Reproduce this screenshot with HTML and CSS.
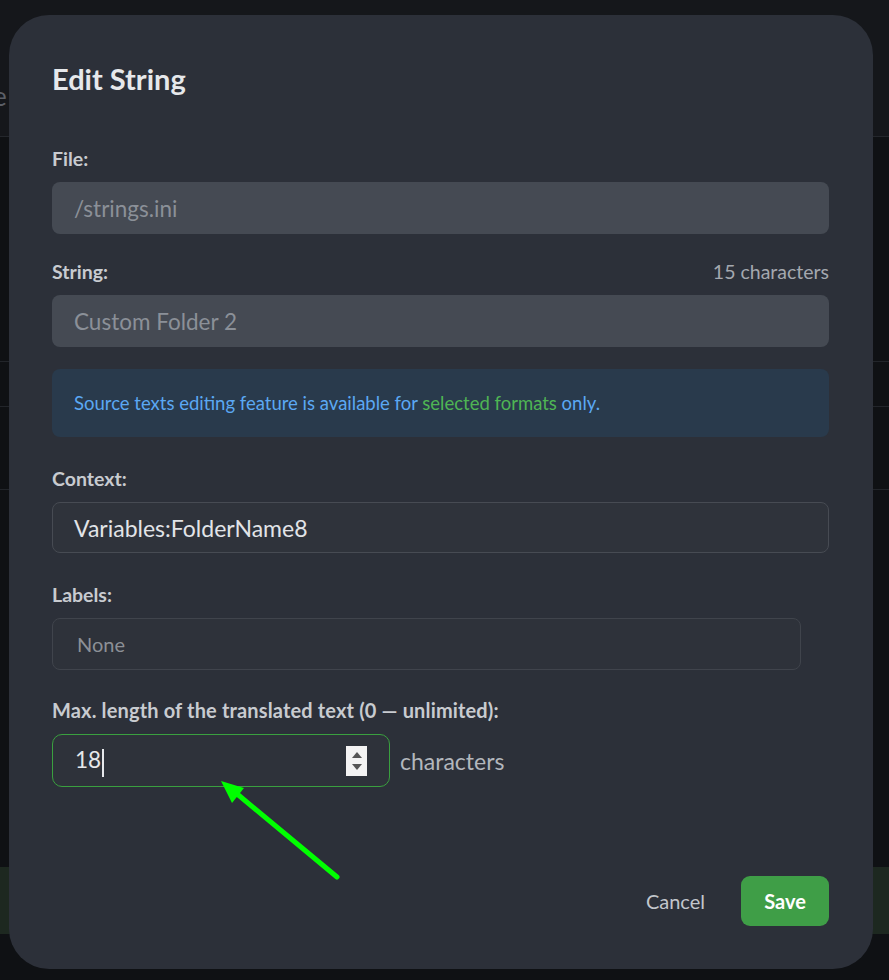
FILE: index.html
```html
<!DOCTYPE html>
<html lang="en">
<head>
<meta charset="utf-8">
<title>Edit String</title>
<link rel="stylesheet" href="styles.css">
</head>
<body>
<div class="page">
  <div class="page-head"><span class="page-title">e</span></div>
  <div class="page-row r1"></div>
  <div class="page-row r2"></div>
  <div class="page-row r3"></div>
  <div class="page-band"></div>
</div>

<div class="modal">
  <h1 class="modal-title">Edit String</h1>

  <div class="field f-file">
    <div class="label-row"><span class="label">File:</span></div>
    <div class="input input-disabled">/strings.ini</div>
  </div>

  <div class="field f-string">
    <div class="label-row"><span class="label">String:</span><span class="count">15 characters</span></div>
    <div class="input input-disabled">Custom Folder 2</div>
  </div>

  <div class="info">Source texts editing feature is available for <span class="info-link">selected formats</span> only.</div>

  <div class="field f-context">
    <div class="label-row"><span class="label">Context:</span></div>
    <div class="input input-text">Variables:FolderName8</div>
  </div>

  <div class="field f-labels">
    <div class="label-row"><span class="label">Labels:</span></div>
    <div class="input input-labels">None</div>
  </div>

  <div class="field f-max">
    <div class="label-row"><span class="label label-long">Max. length of the translated text (0 — unlimited):</span></div>
    <div class="max-row">
      <div class="input input-number">
        <span class="num-value">18</span><span class="caret"></span>
        <span class="spinner"><span class="tri-up"></span><span class="tri-down"></span></span>
      </div>
      <span class="unit">characters</span>
    </div>
  </div>

  <div class="footer">
    <button class="btn-cancel">Cancel</button>
    <button class="btn-save">Save</button>
  </div>
</div>

<svg class="arrow" width="889" height="980" viewBox="0 0 889 980">
  <line x1="337" y1="877" x2="236" y2="793" stroke="#00ff00" stroke-width="5" stroke-linecap="round"/>
  <polygon points="221,781 244,788 232,803" fill="#00ff00"/>
</svg>
</body>
</html>
```

FILE: styles.css
```css
* { box-sizing: border-box; }
html, body { margin: 0; padding: 0; }
body {
  width: 889px;
  height: 980px;
  overflow: hidden;
  background: #0f1114;
  font-family: "Lato", "Liberation Sans", sans-serif;
  position: relative;
}

.page { display: flex; flex-direction: column; }
.page-head {
  height: 137px;
  background: #15171b;
  border-bottom: 1px solid #24272c;
  padding-top: 80px;
}
.page-title { color: #5b5f67; font-size: 26px; margin-left: -7px; }
.page-row { border-bottom: 1px solid #22252a; }
.r1 { height: 225px; }
.r2 { height: 45px; }
.r3 { height: 83px; }
.page-band { margin-top: 377px; height: 67px; background: #1d2820; }

.modal {
  position: absolute;
  left: 9px;
  top: 15px;
  width: 864px;
  height: 954px;
  background: #2c3039;
  border-radius: 40px;
  padding: 48px 44px 43px 43px;
  display: flex;
  flex-direction: column;
}
.modal-title {
  margin: 0;
  font-size: 29px;
  line-height: 32px;
  font-weight: 700;
  color: #e6e8eb;
}

.field { display: flex; flex-direction: column; gap: 12px; }
.f-file { margin-top: 51px; }
.f-string { margin-top: 25px; }
.f-context { margin-top: 29px; }
.f-labels { margin-top: 29px; }
.f-max { margin-top: 28px; }

.label-row { display: flex; justify-content: space-between; align-items: center; height: 24px; }
.label { font-size: 19.5px; font-weight: 700; color: #c8cbd0; }
.label-long { font-size: 20px; letter-spacing: 0.15px; }
.count { font-size: 19.5px; color: #a4a8af; }

.input {
  height: 52px;
  border-radius: 8px;
  display: flex;
  align-items: center;
  padding-left: 22px;
  font-size: 22.5px;
}
.input-disabled { background: #454a53; color: #8b9098; }
.input-text { height: 51px; background: #2f333b; border: 1px solid #474b53; color: #e2e4e8; padding-left: 21px; font-size: 23px; }
.input-labels { width: 749px; background: #2e323a; border: 1px solid #40444c; color: #8c9096; padding-left: 24px; font-size: 20px; }

.info {
  margin-top: 22px;
  height: 68px;
  background: #293a4c;
  border-radius: 8px;
  display: flex;
  align-items: center;
  padding-left: 22px;
  font-size: 18.5px;
  color: #5ba8f3;
  white-space: pre;
}
.info-link { color: #4fb554; }

.max-row { display: flex; align-items: center; gap: 10px; }
.input-number {
  width: 338px;
  height: 53px;
  background: #2e323a;
  border: 1px solid #3aa03f;
  border-radius: 10px;
  padding-left: 22px;
  padding-right: 22px;
  color: #e6e8eb;
  font-size: 22.5px;
}
.num-value { line-height: 1; }
.caret { width: 2px; height: 28px; background: #e6e8eb; margin-left: 1px; margin-top: 4px; }
.spinner {
  margin-left: auto;
  width: 21px;
  height: 30px;
  background: #f3f3f3;
  display: flex;
  flex-direction: column;
  align-items: center;
  justify-content: center;
  gap: 6px;
}
.tri-up { width: 0; height: 0; border-left: 5px solid transparent; border-right: 5px solid transparent; border-bottom: 6px solid #555; }
.tri-down { width: 0; height: 0; border-left: 5px solid transparent; border-right: 5px solid transparent; border-top: 6px solid #555; }
.unit { font-size: 23px; color: #b3b7bd; }

.footer {
  margin-top: auto;
  display: flex;
  justify-content: flex-end;
  align-items: center;
  gap: 36px;
}
.btn-cancel {
  background: none;
  border: none;
  padding: 0;
  font-family: inherit;
  font-size: 20px;
  color: #c2c6cc;
}
.btn-save {
  width: 88px;
  height: 50px;
  border: none;
  border-radius: 9px;
  background: #3f9e47;
  color: #ffffff;
  font-family: inherit;
  font-size: 20px;
  font-weight: 700;
}

.arrow { position: absolute; left: 0; top: 0; pointer-events: none; }
```
